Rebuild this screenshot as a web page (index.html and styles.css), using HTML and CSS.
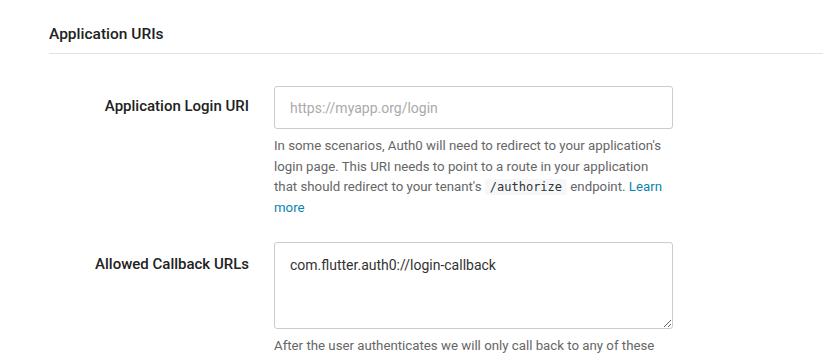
FILE: index.html
```html
<!DOCTYPE html>
<html lang="en">
<head>
    <meta charset="UTF-8">
    <title>Application URIs</title>
    <link rel="stylesheet" href="styles.css">
</head>
<body>
    <div class="section">
        <h3 class="section-title">Application URIs</h3>

        <div class="field">
            <label class="field-label" for="loginUri">Application Login URI</label>
            <div class="field-control">
                <input type="text" id="loginUri" placeholder="https://myapp.org/login">
                <p class="help">
                    In some scenarios, Auth0 will need to redirect to your application's
                    login page. This URI needs to point to a route in your application
                    that should redirect to your tenant's <code>/authorize</code> endpoint.
                    <a href="#">Learn more</a>
                </p>
            </div>
        </div>

        <div class="field">
            <label class="field-label field-label-tall" for="callbacks">Allowed Callback URLs</label>
            <div class="field-control">
                <textarea id="callbacks">com.flutter.auth0://login-callback</textarea>
                <p class="help">
                    After the user authenticates we will only call back to any of these
                    URLs. You can specify multiple valid URLs by comma-separating them.
                </p>
            </div>
        </div>
    </div>
</body>
</html>
```

FILE: styles.css
```css
* {
    margin: 0;
    padding: 0;
    box-sizing: border-box;
}

body {
    font-family: Roboto, 'Liberation Sans', sans-serif;
    background: white;
    color: #333;
}

.section {
    padding: 24px 0 0 49px;
}

.section-title {
    font-size: 15.5px;
    font-weight: 500;
    color: #222;
    line-height: 20px;
    padding-bottom: 9px;
    border-bottom: 1px solid #e3e3e3;
    margin-bottom: 32px;
}

.field {
    display: flex;
    margin-bottom: 24px;
}

.field-label {
    width: 200px;
    text-align: right;
    font-size: 15px;
    font-weight: 500;
    color: #222;
    padding-top: 10px;
    line-height: 20px;
}

.field-label-tall {
    padding-top: 12px;
}

.field-control {
    margin-left: 25px;
    width: 399px;
}

input, textarea {
    display: block;
    width: 100%;
    border: 1px solid #ccc;
    border-radius: 3px;
    font-family: Roboto, 'Liberation Sans', sans-serif;
    font-size: 14px;
    color: #333;
    padding: 0 15px;
}

input {
    height: 43px;
}

input::placeholder {
    color: #aaa;
}

textarea {
    height: 87px;
    padding-top: 12px;
    line-height: 20px;
    resize: vertical;
}

.help {
    max-width: 396px;
    font-size: 13.25px;
    line-height: 20.5px;
    color: #666;
    margin-top: 7px;
}

.help code {
    font-family: 'DejaVu Sans Mono', 'Liberation Mono', monospace;
    font-size: 12px;
    line-height: 16px;
    color: #333;
    background: #f5f7f9;
    border-radius: 3px;
    padding: 1px 5px;
}

.help a {
    color: #0a84ae;
    text-decoration: none;
}
```
